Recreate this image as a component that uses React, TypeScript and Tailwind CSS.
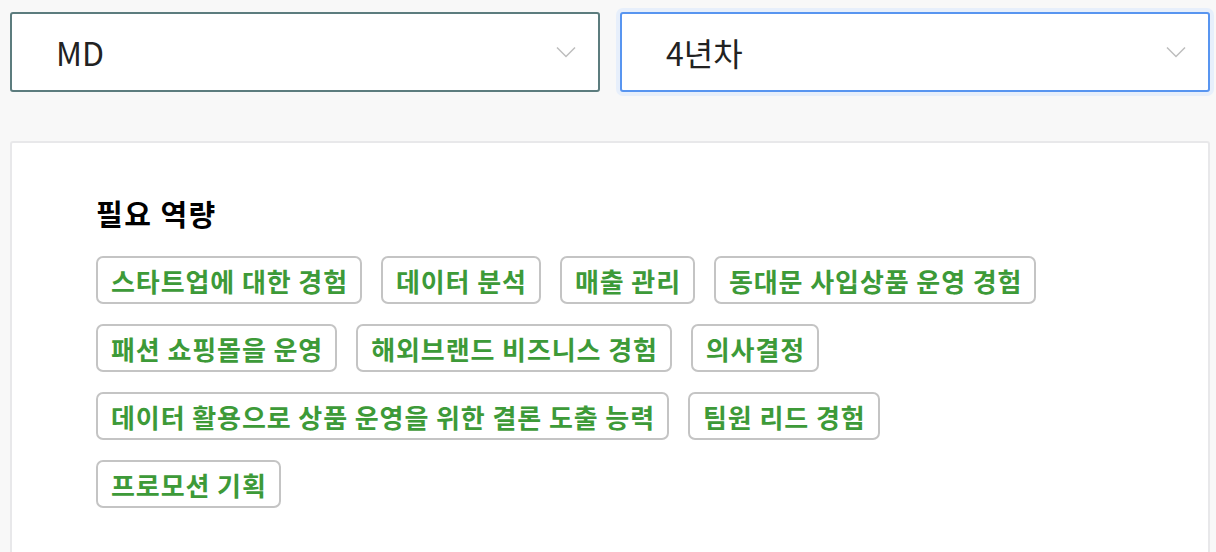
import React from 'react';

const skills = [
  '스타트업에 대한 경험',
  '데이터 분석',
  '매출 관리',
  '동대문 사입상품 운영 경험',
  '패션 쇼핑몰을 운영',
  '해외브랜드 비즈니스 경험',
  '의사결정',
  '데이터 활용으로 상품 운영을 위한 결론 도출 능력',
  '팀원 리드 경험',
  '프로모션 기획',
];

const Chevron = () => (
  <svg width="20" height="12" viewBox="0 0 20 12" fill="none" className="shrink-0">
    <path d="M1 1.5L10 10.5L19 1.5" stroke="#bdbdbd" strokeWidth="1.5" />
  </svg>
);

const Select = ({ value, focused }: { value: string; focused?: boolean }) => (
  <div
    className={`w-[590px] h-[80px] flex items-center justify-between pl-[44px] pr-[22px] bg-white rounded-[3px] border-2 ${
      focused ? 'border-[#5895f0] shadow-[0_0_0_4px_#e7effb]' : 'border-[#5c7c7e]'
    }`}
  >
    <span className="text-[32px] text-[#222]">{value}</span>
    <Chevron />
  </div>
);

export default function App() {
  return (
    <div
      className="h-[552px] bg-[#f8f8f8] pt-[12px] pl-[10px] overflow-hidden"
      style={{ fontFamily: '"Noto Sans CJK KR", "Noto Sans", sans-serif' }}
    >
      <div className="flex gap-[20px]">
        <Select value="MD" />
        <Select value="4년차" focused />
      </div>

      <div className="mt-[49px] w-[1200px] h-[420px] bg-white border-2 border-[#e8e8ea] rounded-[3px] pl-[84px] pt-[50px]">
        <h3 className="text-[29px] font-bold text-black leading-[40px] tracking-[1.5px]">필요 역량</h3>
        <div className="mt-[23px] flex flex-wrap gap-x-[19px] gap-y-[20px] w-[960px]">
          {skills.map((s) => (
            <span
              key={s}
              className="h-[48px] pl-[13px] pr-[12px] flex items-center border-2 border-[#c4c4c4] rounded-[7px] text-[26px] font-bold text-[#3d9a38] tracking-[0.9px]"
            >
              {s}
            </span>
          ))}
        </div>
      </div>
    </div>
  );
}
